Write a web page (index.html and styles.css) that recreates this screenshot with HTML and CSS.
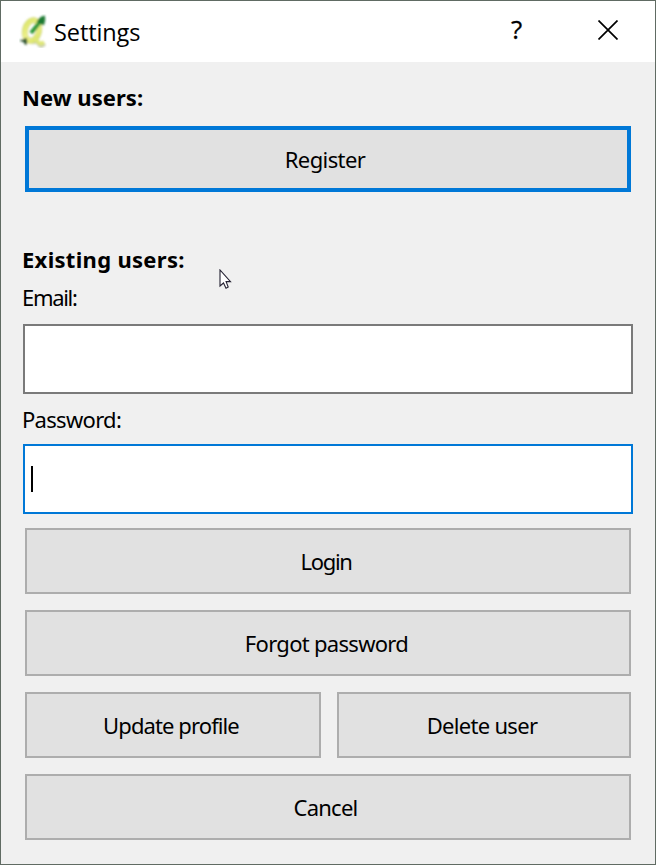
FILE: index.html
```
<!DOCTYPE html>
<html lang="en">
<head>
<meta charset="utf-8">
<title>Settings</title>
<link rel="stylesheet" href="styles.css">
</head>
<body>
<main class="window">
  <header class="titlebar">
    <svg class="logo" width="28" height="34" viewBox="0 0 28 34">
      <defs>
        <linearGradient id="gold" x1="0" y1="0" x2="1" y2="1"><stop offset="0" stop-color="#dbe56a"/><stop offset=".5" stop-color="#edf08a"/><stop offset="1" stop-color="#dae468"/></linearGradient>
        <filter id="soft"><feGaussianBlur stdDeviation=".8"/></filter>
      </defs>
      <g filter="url(#soft)">
        <path d="M13 29Q18 27 20 31Q22 34 26 30" fill="none" stroke="#8e9a5c" stroke-width="3" opacity=".5"/>
        <ellipse cx="13" cy="16.5" rx="7" ry="10.5" fill="none" stroke="#c3cb8b" stroke-width="6" transform="rotate(14 13 16.5)"/>
        <ellipse cx="13" cy="16.5" rx="7" ry="10.5" fill="none" stroke="url(#gold)" stroke-width="5.2" transform="rotate(14 13 16.5)"/>
        <path d="M15 24Q18 25 19 28Q21 31 25 28" fill="none" stroke="#dfe778" stroke-width="3.8"/>
        <path d="M12 19L21 8" fill="none" stroke="#2f9a3a" stroke-width="4.2"/>
        <path d="M18 7.5Q21 2.5 25.5 2Q26.500 6 24.500 11Z" fill="#1f7a32" stroke="#1f7a32"/>
        <path d="M1 26.500Q5 26 7 24Q9 28 7 31Q5 29 5 28Z" fill="#264f2b" stroke="#264f2b" stroke-width=".6"/>
      </g>
    </svg>
    <h1 class="title">Settings</h1>
    <span class="help">?</span>
    <svg class="close" width="20" height="20" viewBox="0 0 20 20"><path d="M.5.5L19.5 19.5M19.5.5L.5 19.5"/></svg>
  </header>
  <section class="content">
    <h2 class="heading new">New users:</h2>
    <button class="button primary">Register</button>
    <h2 class="heading existing">Existing users:</h2>
    <div class="label email">Email:</div>
    <div class="field"></div>
    <div class="label password">Password:</div>
    <div class="field focused"><span class="caret"></span></div>
    <div class="actions">
      <button class="button wide login">Login</button>
      <button class="button wide forgot">Forgot password</button>
      <button class="button update">Update profile</button>
      <button class="button delete">Delete user</button>
      <button class="button wide cancel">Cancel</button>
    </div>
  </section>
  <svg class="pointer" width="13" height="21" viewBox="0 0 13 21"><path d="M1 1V17L4.5 14L7 19.3L9.2 18L7.1 12.6H11.5Z"/></svg>
</main>
</body>
</html>
```
FILE: styles.css
```
* { box-sizing: border-box; }
body { margin: 0; color: #000; font-family: "Noto Sans", "Open Sans", sans-serif; }
.window { position: relative; width: 656px; height: 865px; border: 1px solid #606b63; background: #f0f0f0; overflow: hidden; }
.titlebar { display: flex; height: 61px; background: #fff; padding-left: 18px; }
.logo { margin-top: 13px; }
.title { margin: 0 auto 0 7px; font-size: 23.5px; font-weight: 400; line-height: 32px; padding-top: 15px; font-family: "Open Sans", sans-serif; letter-spacing: -.1px; }
.help { font-size: 26px; line-height: 32px; padding-top: 12px; width: 14px; margin-right: 73px; font-family: "Open Sans", sans-serif; -webkit-text-stroke: .3px #000; }
.close { margin: 19px 37px 0 0; fill: none; stroke: #000; stroke-width: 1.7; }
.content { padding: 0 22px; }
.heading, .label { margin: 0; font-size: 22px; line-height: 30px; white-space: nowrap; }
.heading { font-weight: 700; margin-left: -1px; }
.label { font-weight: 400; margin-left: -1px; }
.new { padding-top: 20px; height: 64px; letter-spacing: .05px; }
.existing { margin-top: 52px; height: 38px; letter-spacing: .3px; }
.email { height: 42px; letter-spacing: -1.3px; }
.password { padding-top: 10px; height: 50px; letter-spacing: -.7px; }
.button { display: flex; align-items: center; justify-content: center; height: 66px; padding: 0; border: 2px solid #adadad; border-radius: 0; background: #e1e1e1; color: #000; font: 22px/30px "Noto Sans", sans-serif; letter-spacing: -.6px; white-space: nowrap; }
.primary { width: 606px; margin-left: 2px; padding-right: 6px; border: 4px solid #0078d7; }
.field { display: flex; align-items: center; height: 70px; border: 2px solid #7a7a7a; background: #fff; padding-left: 6px; }
.focused { border-color: #0078d7; }
.caret { width: 2px; height: 26px; background: #000; }
.actions { display: grid; grid-template-columns: 296px 294px; gap: 16px; margin: 14px 2px 0; }
.wide { grid-column: 1 / -1; }
.login { letter-spacing: -1.3px; padding-right: 4px; }
.forgot { letter-spacing: -.7px; padding-right: 3px; }
.update { letter-spacing: -.9px; padding-right: 4px; }
.delete { letter-spacing: -.7px; padding-right: 4px; }
.cancel { letter-spacing: -.75px; padding-right: 5px; }
.pointer { position: absolute; left: 218px; top: 268px; fill: #fff; stroke: #242132; stroke-width: 1.1; }
```
